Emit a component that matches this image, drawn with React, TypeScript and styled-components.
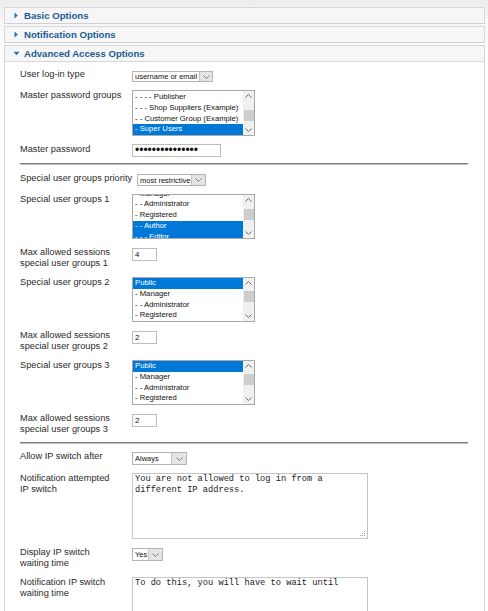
import React from "react";
import styled, { createGlobalStyle } from "styled-components";

const GlobalStyle = createGlobalStyle`
  html, body { margin: 0; padding: 0; }
  body {
    background: linear-gradient(to bottom, #ececec 0px, #f7f7f7 24px, #ffffff 62px);
    font-family: "Liberation Sans", Arial, sans-serif;
    color: #2b2b2b;
  }
`;

const Page = styled.div`
  padding: 7px 3px 0 4px;
`;

const Panel = styled.section`
  border: 1px solid #d7d7d7;
  border-bottom-color: #d0d0d0;
  background: #fff;
  & + & { margin-top: 2px; }
`;

const PanelHeader = styled.div<{ $open?: boolean }>`
  height: 15px;
  display: flex;
  align-items: center;
  gap: 4px;
  padding-left: 8px;
  background: #f6f6f6;
  border-bottom: ${(p) => (p.$open ? "1px solid #d7d7d7" : "none")};
  color: #1b5c94;
  font-weight: bold;
  font-size: 9.6px;
  white-space: nowrap;
`;

const PanelBody = styled.div`
  padding: 7px 16px 24px 15px;
`;

const Fieldset = styled.div`
  display: flex;
  flex-direction: column;
  gap: 8px;
`;

const Row = styled.div`
  display: flex;
  align-items: flex-start;
`;

const Label = styled.div`
  min-width: 112px;
  padding-right: 5px;
  box-sizing: border-box;
  font-size: 9.25px;
  line-height: 11px;
  color: #2b2b2b;
  white-space: nowrap;
`;

const Divider = styled.div<{ $top: number; $bottom: number }>`
  height: 0;
  border-top: 1px solid #7e7e7e;
  border-bottom: 1px solid #bdbdbd;
  margin: ${(p) => p.$top}px 0 ${(p) => p.$bottom}px;
`;

const SelectBox = styled.div<{ $w: number; $h: number; $mt: number }>`
  display: flex;
  width: ${(p) => p.$w}px;
  height: ${(p) => p.$h}px;
  margin-top: ${(p) => p.$mt}px;
  box-sizing: border-box;
  border: 1px solid #b4b4b4;
  background: #fff;
`;

const SelectText = styled.span`
  flex: 1;
  display: flex;
  align-items: center;
  padding-left: 2px;
  font-size: 7.5px;
  color: #111;
  white-space: nowrap;
  overflow: hidden;
`;

const SelectArrow = styled.span<{ $w: number }>`
  width: ${(p) => p.$w}px;
  display: flex;
  align-items: center;
  justify-content: center;
  background: #e4e4e4;
  border-left: 1px solid #c4c4c4;
`;

const ListBox = styled.div<{ $h: number }>`
  display: flex;
  width: 123px;
  height: ${(p) => p.$h}px;
  box-sizing: border-box;
  border: 1px solid #a9a9a9;
  background: #fff;
  overflow: hidden;
`;

const ListItems = styled.div`
  flex: 1;
  overflow: hidden;
`;

const ListInner = styled.div<{ $offset: number }>`
  margin-top: ${(p) => p.$offset}px;
`;

const ListItem = styled.div<{ $sel?: boolean }>`
  height: 10.75px;
  line-height: 10.75px;
  padding-left: 2px;
  font-size: 7.7px;
  white-space: nowrap;
  background: ${(p) => (p.$sel ? "#0078d7" : "transparent")};
  color: ${(p) => (p.$sel ? "#ffffff" : "#111111")};
`;

const Scrollbar = styled.div`
  width: 11px;
  display: flex;
  flex-direction: column;
  background: #f0f0f0;
`;

const ScrollArrow = styled.div`
  height: 10px;
  display: flex;
  align-items: center;
  justify-content: center;
`;

const ScrollTrack = styled.div`
  flex: 1;
  display: flex;
  justify-content: center;
`;

const Thumb = styled.div<{ $top: number }>`
  width: 10px;
  height: 11px;
  margin-top: ${(p) => p.$top}px;
  background: #cdcdcd;
`;

const TextInput = styled.div<{ $w: number; $mt: number }>`
  width: ${(p) => p.$w}px;
  height: 13px;
  margin-top: ${(p) => p.$mt}px;
  box-sizing: border-box;
  border: 1px solid #bdbdbd;
  background: #fff;
  display: flex;
  align-items: center;
  padding-left: 2px;
  font-size: 8px;
  color: #111;
`;

const Dots = styled.span`
  font-size: 12px;
  line-height: 11px;
  color: #111;
  letter-spacing: 0;
`;

const TextArea = styled.div`
  position: relative;
  width: 236px;
  height: 66px;
  box-sizing: border-box;
  border: 1px solid #c6c6c6;
  background: #fff;
  padding: 0 2px;
  font-family: "Liberation Mono", "Courier New", monospace;
  font-size: 8.7px;
  line-height: 11px;
  color: #1a1a1a;
  white-space: pre-wrap;
`;

const Grip = styled.svg`
  position: absolute;
  right: 1px;
  bottom: 1px;
`;

const Chevron = ({ up }: { up?: boolean }) => (
  <svg width="7" height="4" viewBox="0 0 7 4">
    <polyline
      points={up ? "0.5,3.5 3.5,0.5 6.5,3.5" : "0.5,0.5 3.5,3.5 6.5,0.5"}
      fill="none"
      stroke="#6a6a6a"
      strokeWidth="1"
    />
  </svg>
);

const Triangle = ({ open }: { open?: boolean }) => (
  <svg width="7" height="7" viewBox="0 0 7 7">
    {open ? (
      <polygon points="0.5,1.8 6.5,1.8 3.5,5.2" fill="#2f70a8" />
    ) : (
      <polygon points="1.5,0.5 4.8,3.5 1.5,6.5" fill="#2f70a8" />
    )}
  </svg>
);

const Select = ({
  value,
  w,
  h,
  mt,
  aw,
}: {
  value: string;
  w: number;
  h: number;
  mt: number;
  aw: number;
}) => (
  <SelectBox $w={w} $h={h} $mt={mt}>
    <SelectText>{value}</SelectText>
    <SelectArrow $w={aw}>
      <svg width="7" height="4" viewBox="0 0 7 4">
        <polyline points="0.5,0.5 3.5,3.5 6.5,0.5" fill="none" stroke="#7c7c7c" strokeWidth="1" />
      </svg>
    </SelectArrow>
  </SelectBox>
);

const List = ({
  items,
  selected,
  h,
  offset,
  thumb,
}: {
  items: string[];
  selected: number[];
  h: number;
  offset: number;
  thumb: number;
}) => (
  <ListBox $h={h}>
    <ListItems>
      <ListInner $offset={offset}>
        {items.map((it, i) => (
          <ListItem key={i} $sel={selected.includes(i)}>
            {it}
          </ListItem>
        ))}
      </ListInner>
    </ListItems>
    <Scrollbar>
      <ScrollArrow>
        <Chevron up />
      </ScrollArrow>
      <ScrollTrack>
        <Thumb $top={thumb} />
      </ScrollTrack>
      <ScrollArrow>
        <Chevron />
      </ScrollArrow>
    </Scrollbar>
  </ListBox>
);

const Area = ({ text }: { text: string }) => (
  <TextArea>
    {text}
    <Grip width="6" height="6" viewBox="0 0 6 6">
      <rect x="4" y="0" width="1" height="1" fill="#9a9a9a" />
      <rect x="2" y="2" width="1" height="1" fill="#9a9a9a" />
      <rect x="4" y="2" width="1" height="1" fill="#9a9a9a" />
      <rect x="0" y="4" width="1" height="1" fill="#9a9a9a" />
      <rect x="2" y="4" width="1" height="1" fill="#9a9a9a" />
      <rect x="4" y="4" width="1" height="1" fill="#9a9a9a" />
    </Grip>
  </TextArea>
);

const groups = ["Public", "- Manager", "- - Administrator", "- Registered"];

export default function App() {
  return (
    <>
      <GlobalStyle />
      <Page>
        <Panel>
          <PanelHeader>
            <Triangle />
            Basic Options
          </PanelHeader>
        </Panel>
        <Panel>
          <PanelHeader>
            <Triangle />
            Notification Options
          </PanelHeader>
        </Panel>
        <Panel>
          <PanelHeader $open>
            <Triangle open />
            Advanced Access Options
          </PanelHeader>
          <PanelBody>
            <Fieldset>
              <Row>
                <Label>User log-in type</Label>
                <Select value="username or email" w={81} h={11} mt={2} aw={12} />
              </Row>
              <Row>
                <Label>Master password groups</Label>
                <List
                  items={[
                    "- - - - Publisher",
                    "- - - Shop Suppliers (Example)",
                    "- - Customer Group (Example)",
                    "- Super Users",
                  ]}
                  selected={[3]}
                  h={46}
                  offset={1}
                  thumb={9}
                />
              </Row>
              <Row>
                <Label>Master password</Label>
                <TextInput $w={89} $mt={0}>
                  <Dots>•••••••••••••••</Dots>
                </TextInput>
              </Row>
            </Fieldset>

            <Divider $top={6} $bottom={8} />

            <Fieldset>
              <Row>
                <Label>Special user groups priority</Label>
                <Select value="most restrictive" w={69} h={12} mt={1} aw={13} />
              </Row>
              <Row>
                <Label>Special user groups 1</Label>
                <List
                  items={["- Manager", "- - Administrator", "- Registered", "- - Author", "- - - Editor"]}
                  selected={[3, 4]}
                  h={45}
                  offset={-6.4}
                  thumb={4}
                />
              </Row>
              <Row>
                <Label>
                  Max allowed sessions
                  <br />
                  special user groups 1
                </Label>
                <TextInput $w={25} $mt={1}>4</TextInput>
              </Row>
              <Row>
                <Label>Special user groups 2</Label>
                <List items={groups} selected={[0]} h={45} offset={0} thumb={3} />
              </Row>
              <Row>
                <Label>
                  Max allowed sessions
                  <br />
                  special user groups 2
                </Label>
                <TextInput $w={25} $mt={1}>2</TextInput>
              </Row>
              <Row>
                <Label>Special user groups 3</Label>
                <List items={groups} selected={[0]} h={45} offset={0} thumb={3} />
              </Row>
              <Row>
                <Label>
                  Max allowed sessions
                  <br />
                  special user groups 3
                </Label>
                <TextInput $w={25} $mt={1}>2</TextInput>
              </Row>
            </Fieldset>

            <Divider $top={7} $bottom={7} />

            <Fieldset>
              <Row>
                <Label>Allow IP switch after</Label>
                <Select value="Always" w={55} h={13} mt={1} aw={14} />
              </Row>
              <Row>
                <Label>
                  Notification attempted
                  <br />
                  IP switch
                </Label>
                <Area text="You are not allowed to log in from a different IP address." />
              </Row>
              <Row>
                <Label>
                  Display IP switch
                  <br />
                  waiting time
                </Label>
                <Select value="Yes" w={31} h={13} mt={1} aw={13} />
              </Row>
              <Row>
                <Label>
                  Notification IP switch
                  <br />
                  waiting time
                </Label>
                <Area text="To do this, you will have to wait until" />
              </Row>
            </Fieldset>
          </PanelBody>
        </Panel>
      </Page>
    </>
  );
}
